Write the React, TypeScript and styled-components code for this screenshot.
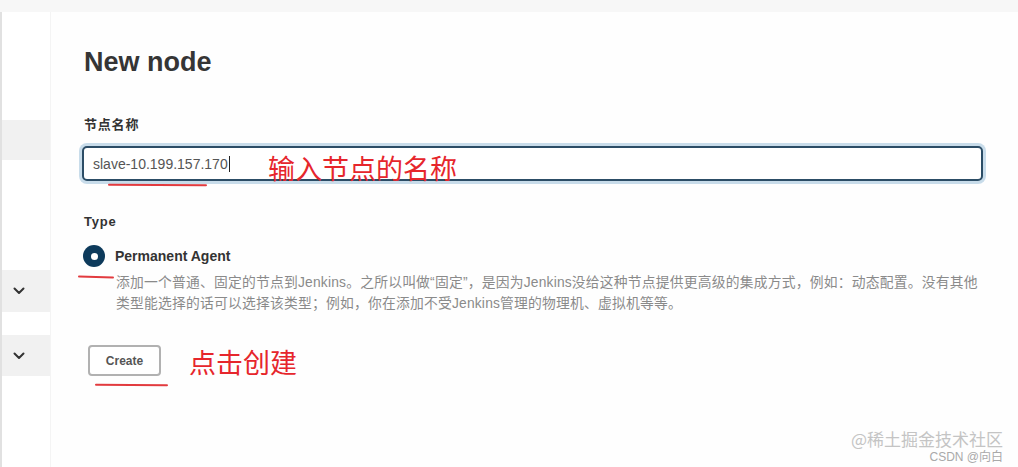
import React from "react";
import styled, { createGlobalStyle } from "styled-components";

const GlobalStyle = createGlobalStyle`
  html, body {
    margin: 0;
    padding: 0;
    background: #ffffff;
    font-family: "Liberation Sans", "Noto Sans CJK SC", sans-serif;
    color: #333333;
  }
  * { box-sizing: border-box; }
`;

const Page = styled.div`
  width: 1018px;
  height: 467px;
  overflow: hidden;
  position: relative;
  display: flex;
  flex-direction: column;
`;

const TopBand = styled.div`
  height: 12px;
  flex: none;
  background: #f7f7f7;
`;

const Body = styled.div`
  flex: 1;
  display: flex;
`;

const Sidebar = styled.nav`
  width: 51px;
  flex: none;
  border-left: 2px solid #e1e1e1;
  border-right: 1px solid #f4f4f4;
  display: flex;
  flex-direction: column;
`;

const SideRow = styled.div<{ $top: number; $h: number }>`
  margin-top: ${(p) => p.$top}px;
  height: ${(p) => p.$h}px;
  background: #f1f1f1;
  display: flex;
  align-items: center;
  padding-left: 11px;
  color: #333;
`;

const Main = styled.main`
  flex: 1;
  padding: 34px 35px 0 33px;
  display: flex;
  flex-direction: column;
  background: #fefefe;
`;

const Title = styled.h1`
  margin: 0;
  font-size: 27px;
  line-height: 32px;
  font-weight: 700;
  color: #353535;
`;

const FieldLabel = styled.div<{ $mt: number }>`
  margin-top: ${(p) => p.$mt}px;
  font-size: 13px;
  line-height: 20px;
  font-weight: 700;
  letter-spacing: 0.8px;
  color: #333;
`;

const InputWrap = styled.div`
  position: relative;
  margin-top: 11px;
  margin-left: -2px;
`;

const TextInput = styled.div`
  height: 35px;
  border: 2px solid #2c4d66;
  border-radius: 5px;
  box-shadow: 0 0 0 3px #c8dcea;
  background: #ffffff;
  display: flex;
  align-items: center;
  padding-left: 9px;
  font-size: 14px;
  color: #555;
`;

const Caret = styled.span`
  display: inline-block;
  width: 1px;
  height: 16px;
  background: #222;
  margin-left: 1px;
`;

const RedNote = styled.span`
  color: #e6262c;
  font-family: "Noto Sans CJK SC", sans-serif;
  font-size: 27px;
  line-height: 32px;
  font-weight: 400;
  white-space: nowrap;
`;

const InputNote = styled(RedNote)`
  position: absolute;
  left: 186px;
  top: 6px;
`;

const RedStroke = styled.span<{ $l: number; $t: number; $w: number; $rot?: number }>`
  position: absolute;
  left: ${(p) => p.$l}px;
  top: ${(p) => p.$t}px;
  width: ${(p) => p.$w}px;
  height: 2px;
  border-radius: 2px;
  background: #e23b3f;
  transform: rotate(${(p) => p.$rot ?? 0}deg);
`;

const Option = styled.div`
  position: relative;
  margin-top: 13px;
  display: flex;
  flex-direction: column;
`;

const OptionHead = styled.div`
  display: flex;
  align-items: center;
  gap: 10px;
  margin-left: -1px;
`;

const Radio = styled.span`
  width: 22px;
  height: 22px;
  border-radius: 50%;
  background: #0d3a5b;
  display: flex;
  align-items: center;
  justify-content: center;
  &::after {
    content: "";
    width: 7px;
    height: 7px;
    border-radius: 50%;
    background: #fff;
  }
`;

const OptionName = styled.span`
  font-size: 14px;
  font-weight: 700;
  color: #333;
`;

const Description = styled.p`
  margin: 5px 0 0 32px;
  font-size: 13.8px;
  line-height: 21px;
  letter-spacing: 0.2px;
  color: #8a8a8a;
  white-space: nowrap;
`;

const Actions = styled.div`
  position: relative;
  margin-top: 29px;
  margin-left: 4px;
  display: flex;
  align-items: center;
  gap: 28px;
`;

const Button = styled.button`
  width: 73px;
  height: 31px;
  border: 2px solid #b1b1b1;
  border-radius: 4px;
  background: #fff;
  font-family: "Liberation Sans", sans-serif;
  font-size: 12px;
  font-weight: 700;
  color: #555;
  padding: 0;
`;

const ActionNote = styled(RedNote)`
  margin-top: 3px;
`;

const Watermark = styled.div`
  position: absolute;
  right: 15px;
  bottom: 17px;
  font-family: "Noto Sans CJK SC", sans-serif;
  font-size: 17px;
  line-height: 22px;
  color: #c4c4c4;
  white-space: nowrap;
`;

const WatermarkSub = styled.div`
  position: absolute;
  right: 15px;
  bottom: 3px;
  font-family: "Liberation Sans", "Noto Sans CJK SC", sans-serif;
  font-size: 12px;
  line-height: 14px;
  color: #a9a9a9;
  white-space: nowrap;
`;

const Chevron = () => (
  <svg width="12" height="8" viewBox="0 0 12 8" fill="none">
    <path d="M1.5 1.5L6 6l4.5-4.5" stroke="#333" strokeWidth="2" strokeLinecap="round" strokeLinejoin="round" />
  </svg>
);

export default function App() {
  return (
    <>
      <GlobalStyle />
      <Page>
        <TopBand />
        <Body>
          <Sidebar>
            <SideRow $top={108} $h={40} />
            <SideRow $top={110} $h={42}>
              <Chevron />
            </SideRow>
            <SideRow $top={23} $h={41}>
              <Chevron />
            </SideRow>
          </Sidebar>
          <Main>
            <Title>New node</Title>
            <FieldLabel $mt={37}>节点名称</FieldLabel>
            <InputWrap>
              <TextInput>
                slave-10.199.157.170
                <Caret />
              </TextInput>
              <InputNote>输入节点的名称</InputNote>
              <RedStroke $l={26} $t={38} $w={99} $rot={0.4} />
            </InputWrap>
            <FieldLabel $mt={31}>Type</FieldLabel>
            <Option>
              <OptionHead>
                <Radio />
                <OptionName>Permanent Agent</OptionName>
              </OptionHead>
              <RedStroke $l={-6} $t={31} $w={36} $rot={1.5} />
              <Description>
                添加一个普通、固定的节点到Jenkins。之所以叫做“固定”，是因为Jenkins没给这种节点提供更高级的集成方式，例如：动态配置。没有其他
                <br />
                类型能选择的话可以选择该类型；例如，你在添加不受Jenkins管理的物理机、虚拟机等等。
              </Description>
            </Option>
            <Actions>
              <Button>Create</Button>
              <ActionNote>点击创建</ActionNote>
              <RedStroke $l={7} $t={41} $w={73} $rot={0.5} />
            </Actions>
          </Main>
        </Body>
        <Watermark>@稀土掘金技术社区</Watermark>
        <WatermarkSub>CSDN @向白</WatermarkSub>
      </Page>
    </>
  );
}
